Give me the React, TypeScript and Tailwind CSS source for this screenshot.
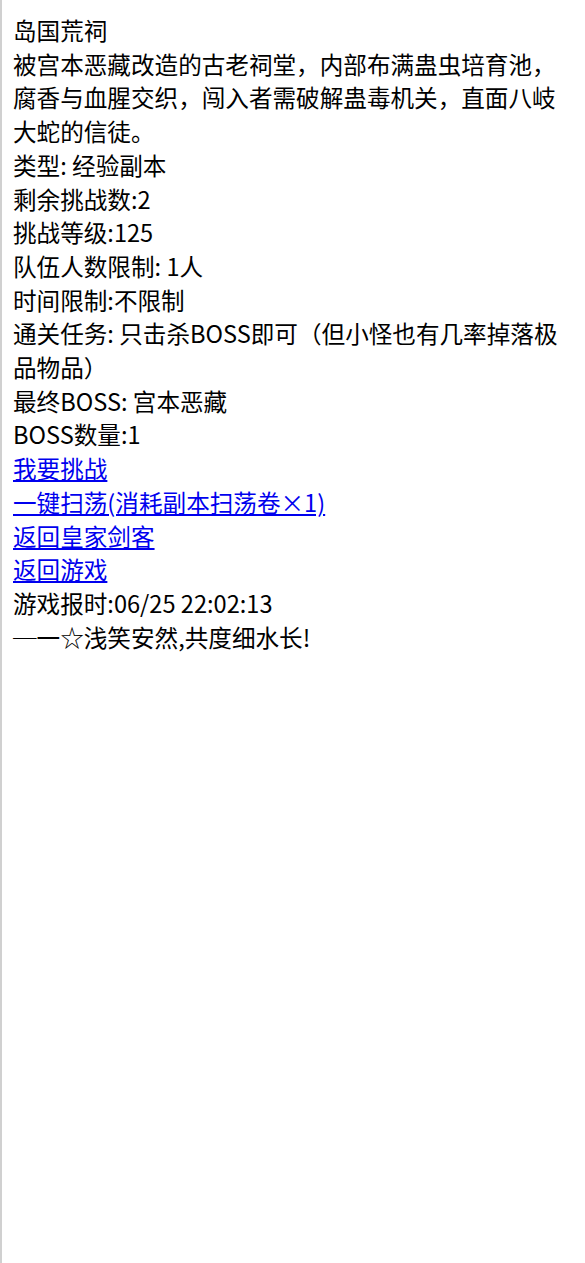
export default function App() {
  const lines = [
    '被宫本恶藏改造的古老祠堂，内部布满蛊虫培育池，腐香与血腥交织，闯入者需破解蛊毒机关，直面八岐大蛇的信徒。',
    '类型: 经验副本',
    '剩余挑战数:2',
    '挑战等级:125',
    '队伍人数限制: 1人',
    '时间限制:不限制',
    '通关任务: 只击杀BOSS即可（但小怪也有几率掉落极品物品）',
    '最终BOSS: 宫本恶藏',
    'BOSS数量:1',
  ]
  const links = ['我要挑战', '一键扫荡(消耗副本扫荡卷×1)', '返回皇家剑客', '返回游戏']

  return (
    <div
      className="min-h-screen bg-white border-l-2 border-[#d0d0d0] pl-[11px] pr-3 pt-[14px] text-[23.6px] leading-[33.7px] text-black"
      style={{ fontFamily: '"Noto Sans CJK SC", "Noto Sans", sans-serif' }}
    >
      <div>岛国荒祠</div>
      {lines.map((t) => (
        <div key={t}>{t}</div>
      ))}
      {links.map((t) => (
        <div key={t}>
          <a href="#" className="text-[#0000ee] underline">
            {t}
          </a>
        </div>
      ))}
      <div>游戏报时:06/25 22:02:13</div>
      <div>─一☆浅笑安然,共度细水长!</div>
    </div>
  )
}
